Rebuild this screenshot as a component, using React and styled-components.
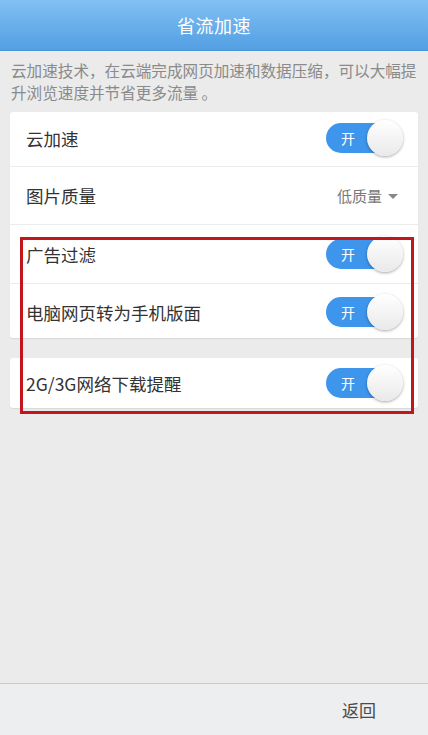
import React from "react";
import styled, { createGlobalStyle } from "styled-components";

const Global = createGlobalStyle`
  html, body { margin: 0; padding: 0; }
  body {
    font-family: "Noto Sans CJK SC", "Liberation Sans", sans-serif;
    background: #ebebeb;
  }
  * { box-sizing: border-box; }
`;

const Screen = styled.div`
  width: 428px;
  height: 735px;
  display: flex;
  flex-direction: column;
  background: #ebebeb;
  position: relative;
  overflow: hidden;
`;

const Header = styled.header`
  height: 51px;
  flex: none;
  display: flex;
  align-items: center;
  justify-content: center;
  background: linear-gradient(#82c0f4, #529fe3);
  border-bottom: 1px solid #4a93d4;
  color: #fff;
  font-size: 18px;
  letter-spacing: 0.5px;
`;

const Content = styled.main`
  flex: 1;
  padding: 8px 10px 0;
  display: flex;
  flex-direction: column;
  position: relative;
`;

const Intro = styled.p`
  margin: 0 0 9px;
  padding: 0 0 0 1px;
  font-size: 15.6px;
  line-height: 22px;
  color: #8a8a8a;
`;

const Card = styled.section`
  background: #fff;
  border-radius: 3px;
  box-shadow: 0 1px 1px rgba(0, 0, 0, 0.08);
  margin-bottom: ${(p) => p.$gap || 0}px;
`;

const Row = styled.div`
  height: ${(p) => p.$h || 57}px;
  display: flex;
  align-items: center;
  justify-content: space-between;
  padding: ${(p) => Math.max(p.$shift || 0, 0) * 2}px 16px
    ${(p) => Math.max(-(p.$shift || 0), 0) * 2}px 16px;
  border-top: ${(p) => (p.$first ? "none" : "1px solid #ececec")};
`;

const Label = styled.span`
  font-size: 17.5px;
  color: #333;
`;

const Select = styled.span`
  display: flex;
  align-items: center;
  gap: 6px;
  font-size: 15px;
  color: #777;
  padding-right: 4px;
`;

const Caret = styled.span`
  width: 0;
  height: 0;
  border-left: 5px solid transparent;
  border-right: 5px solid transparent;
  border-top: 5px solid #888;
  margin-top: 2px;
`;

const Track = styled.span`
  position: relative;
  width: 76px;
  height: 30px;
  border-radius: 15px;
  background: #3d95ec;
  color: #fff;
  font-size: 14px;
  display: flex;
  align-items: center;
  padding-left: 15px;
`;

const Knob = styled.span`
  position: absolute;
  right: -1px;
  top: -3px;
  width: 36px;
  height: 36px;
  border-radius: 50%;
  background: linear-gradient(#ffffff, #e9e9e9);
  box-shadow: 0 1px 3px rgba(0, 0, 0, 0.35);
`;

const Marker = styled.div`
  position: absolute;
  left: 20px;
  top: 186px;
  width: 394px;
  height: 177px;
  border: 3px solid #c3161c;
  pointer-events: none;
`;

const Footer = styled.footer`
  height: 52px;
  flex: none;
  background: #eceef0;
  border-top: 1px solid #c9cbcd;
  display: flex;
  align-items: center;
  justify-content: flex-end;
  padding-right: 52px;
  font-size: 17px;
  color: #4a4a4a;
`;

const Toggle = () => (
  <Track>
    开
    <Knob />
  </Track>
);

export default function App() {
  return (
    <>
      <Global />
      <Screen>
        <Header>省流加速</Header>
        <Content>
          <Intro>
            云加速技术，在云端完成网页加速和数据压缩，可以大幅提升浏览速度并节省更多流量 。
          </Intro>
          <Card $gap={20}>
            <Row $first $h={54} $shift={-1}>
              <Label>云加速</Label>
              <Toggle />
            </Row>
            <Row $h={58}>
              <Label>图片质量</Label>
              <Select>
                低质量
                <Caret />
              </Select>
            </Row>
            <Row $h={59}>
              <Label>广告过滤</Label>
              <Toggle />
            </Row>
            <Row $h={55} $shift={1}>
              <Label>电脑网页转为手机版面</Label>
              <Toggle />
            </Row>
          </Card>
          <Card>
            <Row $first $h={50}>
              <Label>2G/3G网络下载提醒</Label>
              <Toggle />
            </Row>
          </Card>
          <Marker />
        </Content>
        <Footer>返回</Footer>
      </Screen>
    </>
  );
}
